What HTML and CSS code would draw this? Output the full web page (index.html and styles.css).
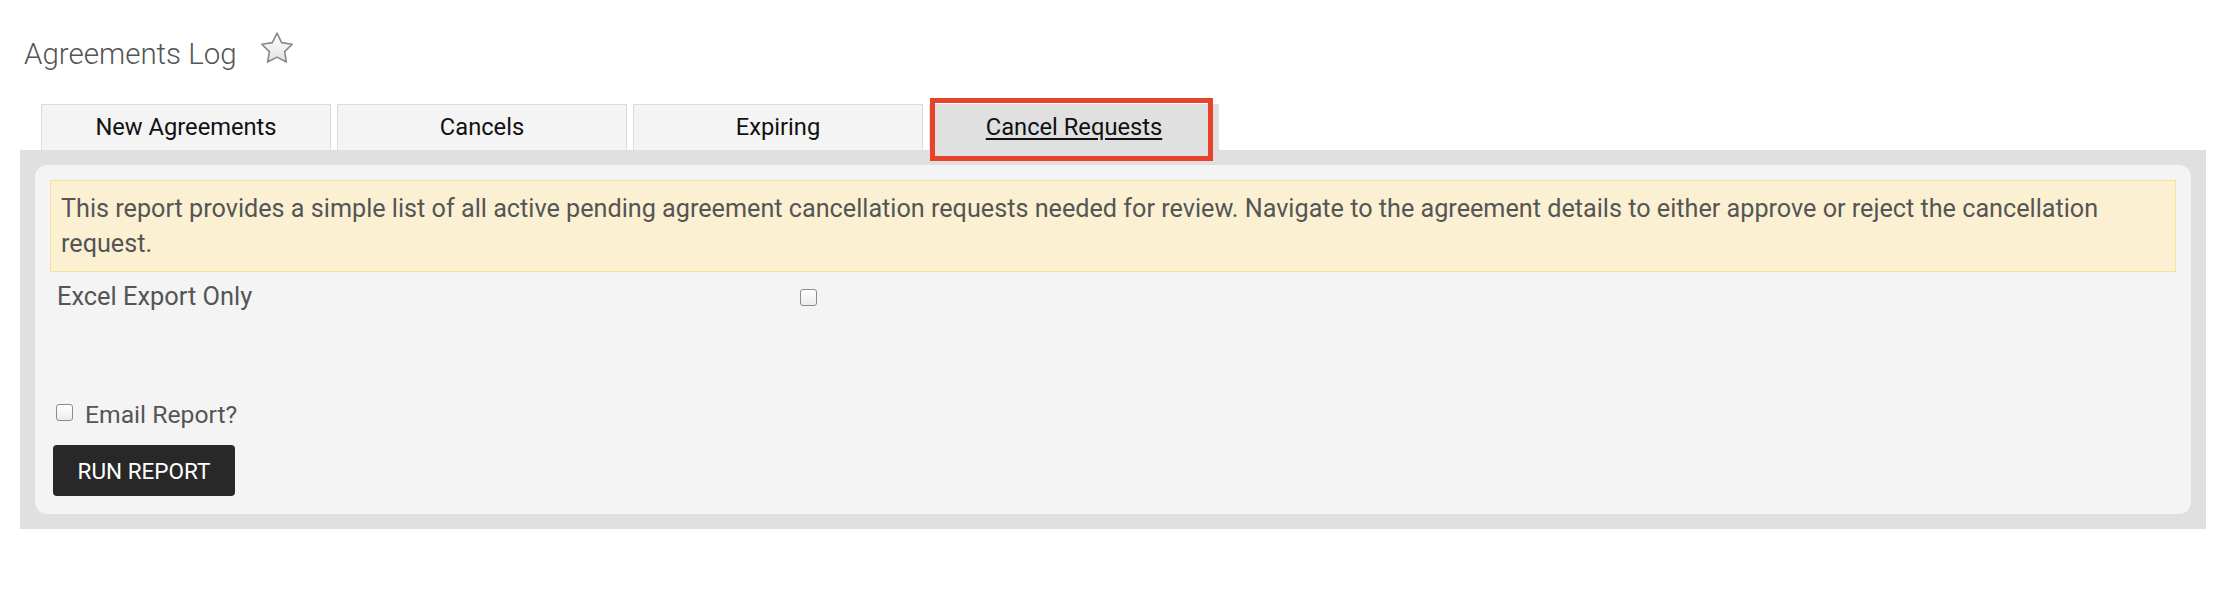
FILE: index.html
```html
<!DOCTYPE html>
<html lang="en">
<head>
    <meta charset="UTF-8">
    <title>Agreements Log</title>
    <link rel="stylesheet" href="styles.css">
</head>
<body>
<header class="page-header">
    <h1 class="page-title">Agreements Log</h1>
    <svg class="fav-star" viewBox="2 2 28 28" aria-hidden="true">
        <defs>
            <linearGradient id="starFill" x1="0" y1="0" x2="0" y2="1">
                <stop offset="0" stop-color="#ffffff"/>
                <stop offset="1" stop-color="#e2e2e2"/>
            </linearGradient>
        </defs>
        <path d="M16 3L20.1 11.3 29.3 12.7 22.7 19.2 24.2 28.3 16 24 7.8 28.3 9.3 19.2 2.7 12.7 11.9 11.3Z"
              fill="url(#starFill)" stroke="#888" stroke-width="1.4" stroke-linejoin="round"/>
    </svg>
</header>

<nav class="tabs">
    <a class="tab" href="#">New Agreements</a>
    <a class="tab" href="#">Cancels</a>
    <a class="tab" href="#">Expiring</a>
    <a class="tab tab-active" href="#">Cancel Requests<span class="tab-highlight"></span></a>
</nav>

<section class="panel">
    <div class="card">
        <div class="notice">
            This report provides a simple list of all active pending agreement cancellation requests needed for review. Navigate to the agreement details to either approve or reject the cancellation request.
        </div>

        <div class="field-row">
            <label class="field-label" for="excelOnly">Excel Export Only</label>
            <input type="checkbox" id="excelOnly" class="field-check">
        </div>

        <label class="email-row">
            <input type="checkbox" class="field-check">
            <span>Email Report?</span>
        </label>

        <button class="btn-run" type="button">RUN REPORT</button>
    </div>
</section>
</body>
</html>
```

FILE: styles.css
```css
* {
    box-sizing: border-box;
}

body {
    margin: 0;
    font-family: Roboto, "Liberation Sans", Arial, sans-serif;
    color: #555;
    background: #fff;
}

.page-header {
    display: flex;
    align-items: flex-start;
    gap: 24px;
    padding: 36px 24px 0;
}

.page-title {
    margin: 0;
    font-size: 29.5px;
    line-height: 36px;
    font-weight: 300;
    color: #555;
}

.fav-star {
    width: 32px;
    height: 32px;
    margin-top: -4px;
}

/* tab strip */
.tabs {
    display: flex;
    gap: 6px;
    margin-top: 32px;
    padding-left: 41px;
}

.tab {
    position: relative;
    width: 290px;
    height: 46px;
    line-height: 44px;
    text-align: center;
    font-size: 23.7px;
    color: #111;
    text-decoration: none;
    background: #f4f4f4;
    border: 1px solid #dcdcdc;
    border-bottom: 0;
}

.tab-active {
    background: #e0e0e0;
    border-color: #e0e0e0;
    text-decoration: underline;
    text-decoration-thickness: 2px;
    text-underline-offset: 3px;
}

.tab-highlight {
    position: absolute;
    left: 0;
    top: -7px;
    width: 283px;
    height: 63px;
    border: 5px solid #e8432a;
    pointer-events: none;
}

/* report panel */
.panel {
    margin: 0 16px 0 20px;
    padding: 15px;
    background: #e0e0e0;
}

.card {
    padding: 15px 15px 18px;
    background: #f4f4f4;
    border-radius: 12px;
}

.notice {
    padding: 10px;
    font-size: 25.2px;
    line-height: 35px;
    color: #555;
    background: #fbf1d2;
    border: 1px solid #f5e2a2;
}

.field-row {
    display: flex;
    align-items: flex-start;
    height: 128px;
    padding: 9px 0 0 7px;
    font-size: 25.4px;
    line-height: 30px;
}

.field-label {
    width: 743px;
}

.field-check {
    appearance: none;
    flex: none;
    width: 17px;
    height: 17px;
    margin: 8px 0 0;
    background: linear-gradient(#ffffff, #ececec);
    border: 1px solid #8c8c8c;
    border-radius: 3px;
}

.email-row {
    display: flex;
    align-items: flex-start;
    gap: 12px;
    padding-left: 6px;
    font-size: 24.7px;
    line-height: 30px;
}

.email-row .field-check {
    margin-top: 4px;
}

.btn-run {
    display: block;
    margin: 15px 0 0 3px;
    width: 182px;
    height: 51px;
    padding: 0;
    font-family: inherit;
    font-size: 22.5px;
    color: #fff;
    background: #282828;
    border: 0;
    border-radius: 4px;
}
```
